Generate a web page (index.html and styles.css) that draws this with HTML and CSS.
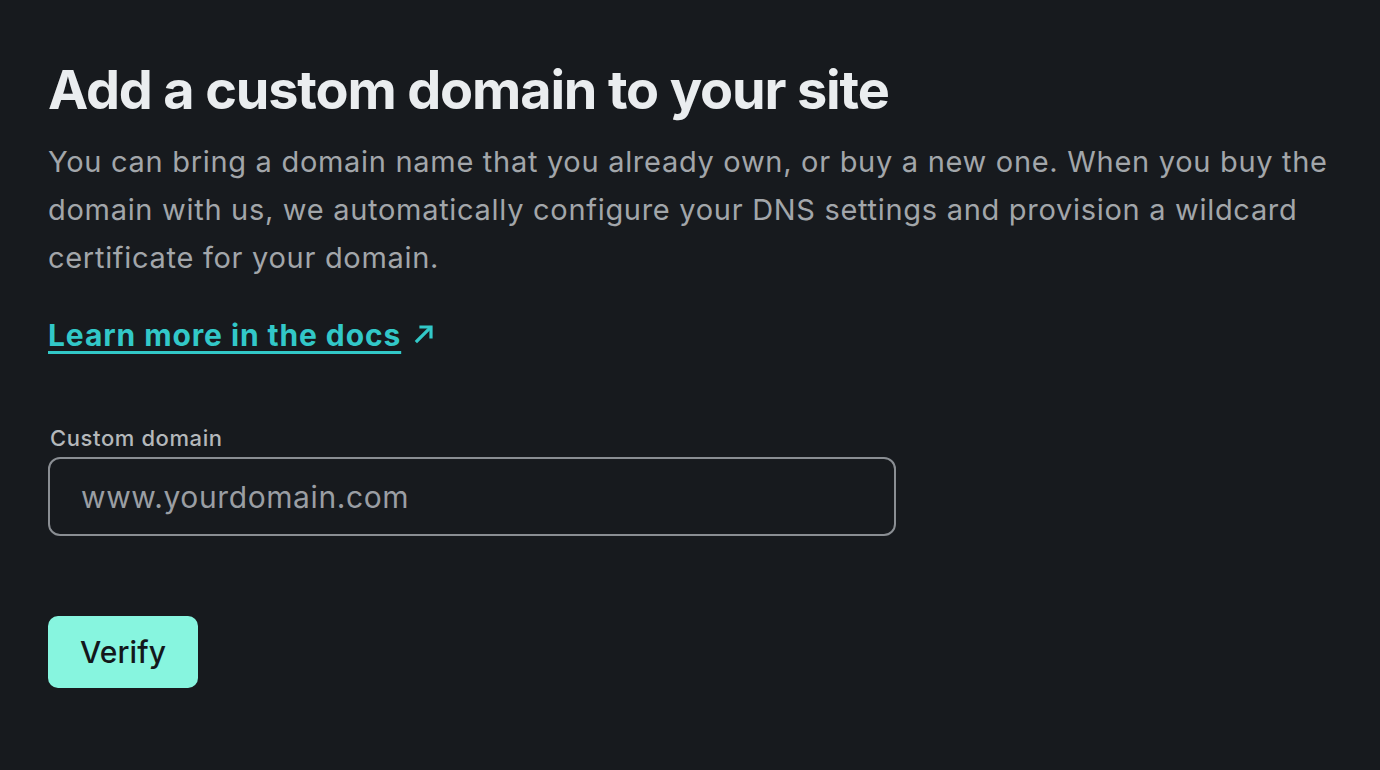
FILE: index.html
```html
<!DOCTYPE html>
<html lang="en">
<head>
<meta charset="utf-8">
<title>Add a custom domain</title>
<link rel="stylesheet" href="styles.css">
</head>
<body>
<main class="page">
  <h1 class="title">Add a custom domain to your site</h1>
  <p class="lead">You can bring a domain name that you already own, or buy a new one. When you buy the domain with us, we automatically configure your DNS settings and provision a wildcard certificate for your domain.</p>
  <a class="doc-link" href="#"><span class="doc-link-text">Learn more in the docs</span><svg class="arrow" width="22" height="22" viewBox="0 0 22 22" fill="none" stroke="currentColor" stroke-width="3.2" stroke-linecap="square"><path d="M4 18 L17 5"/><path d="M8 4 H18 V14"/></svg></a>
  <form class="form">
    <label class="label" for="domain">Custom domain</label>
    <input class="input" id="domain" type="text" placeholder="www.yourdomain.com">
    <button class="btn" type="button">Verify</button>
  </form>
</main>
</body>
</html>
```

FILE: styles.css
```css
html, body {
  margin: 0;
  padding: 0;
  background: #171a1e;
}
body {
  font-family: Inter, "Noto Sans", "Liberation Sans", sans-serif;
  color: #e9ebed;
}
.page {
  padding: 58px 48px 0 48px;
  display: flex;
  flex-direction: column;
  align-items: flex-start;
}
.title {
  margin: 0;
  font-size: 54px;
  line-height: 64px;
  font-weight: 700;
  color: #eaedef;
  letter-spacing: -1.15px;
}
.lead {
  margin: 16px 0 0 0;
  font-size: 29px;
  line-height: 48px;
  color: #a2a6aa;
  letter-spacing: 0.7px;
  max-width: 1300px;
}
.doc-link {
  margin-top: 29px;
  display: inline-flex;
  align-items: center;
  gap: 12px;
  font-size: 30px;
  line-height: 48px;
  font-weight: 700;
  color: #32c8c8;
  letter-spacing: 0.9px;
  text-decoration: none;
}
.doc-link-text {
  text-decoration: underline;
  text-decoration-thickness: 3px;
  text-underline-offset: 5px;
}
.arrow {
  display: block;
  margin-top: -2px;
}
.form {
  margin-top: 65px;
  display: flex;
  flex-direction: column;
  align-items: flex-start;
}
.label {
  font-size: 22px;
  line-height: 28px;
  font-weight: 500;
  color: #b4b8bb;
  letter-spacing: 0.6px;
  padding-left: 2px;
}
.input {
  margin-top: 5px;
  box-sizing: border-box;
  width: 848px;
  height: 79px;
  background: transparent;
  border: 2px solid #8a8e93;
  border-radius: 12px;
  padding: 0 31px;
  font-family: inherit;
  font-size: 30px;
  letter-spacing: 0.6px;
  color: #e9ebed;
  outline: none;
}
.input::placeholder {
  color: #9a9ea3;
  opacity: 1;
}
.btn {
  margin-top: 80px;
  height: 72px;
  padding: 0 32px;
  background: #87f5df;
  border: none;
  border-radius: 10px;
  font-family: inherit;
  font-size: 30px;
  font-weight: 500;
  letter-spacing: 0.1px;
  color: #13171b;
  cursor: pointer;
}
```
